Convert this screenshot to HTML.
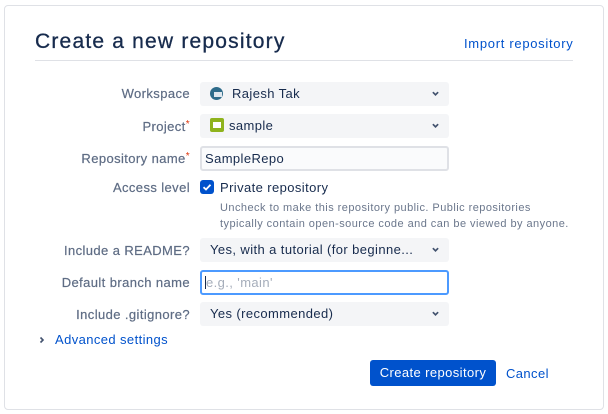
<!DOCTYPE html>
<html><head><style>
*{box-sizing:border-box;margin:0;padding:0}
body{width:608px;height:414px;background:#fff;font-family:"Liberation Sans",sans-serif;color:#172b4d;position:relative;overflow:hidden;letter-spacing:0.4px}
.card{position:absolute;left:4px;top:5px;width:600px;height:405px;border:1px solid #dfe1e6;border-radius:4px}
.abs{position:absolute}
h1{position:absolute;left:35px;top:30px;font-size:21px;font-weight:normal;color:#172b4d;letter-spacing:1.2px;-webkit-text-stroke:0.3px #172b4d}
.imp{left:464px;top:36px;font-size:13px;color:#0052cc;letter-spacing:0.7px}
.hr{left:35px;top:60px;width:538px;height:1px;background:#dfe1e6}
.lbl{right:418px;font-size:13px;color:#5e6c84;text-align:right;white-space:nowrap;-webkit-text-stroke:0.2px #5e6c84}
.req{color:#de350b;font-size:10px;vertical-align:top;-webkit-text-stroke:0}
.sel{left:200px;width:249px;height:24px;background:#f4f5f7;border-radius:3px;font-size:13px;color:#172b4d;line-height:24px;padding-left:10px}
.chev{position:absolute;right:10px;top:8px;width:7px;height:7px}
.inp{left:200px;width:249px;height:25px;border:2px solid #dfe1e6;border-radius:3px;background:#fafbfc;font-size:13px;line-height:21px;padding-left:3px}
</style></head><body>
<div class="card"></div>
<h1>Create a new repository</h1>
<div class="abs imp">Import repository</div>
<div class="abs hr"></div>

<div class="abs lbl" style="top:86px">Workspace</div>
<div class="abs sel" style="top:82px"><span style="display:inline-block;width:13px;height:13px;border-radius:50%;background:#2e6b8a;vertical-align:-2px;margin-right:9px;position:relative;overflow:hidden"><span style="position:absolute;left:4px;top:5px;width:8px;height:5px;background:#dfe7ee"></span></span>Rajesh Tak<svg class="chev" viewBox="0 0 8 8"><path d="M1 2.5L4 5.5L7 2.5" stroke="#42526e" stroke-width="2" fill="none"/></svg></div>

<div class="abs lbl" style="top:119px">Project<span class="req">*</span></div>
<div class="abs sel" style="top:114px"><span style="display:inline-block;width:14px;height:14px;border-radius:2px;background:#8fb31d;vertical-align:-2px;margin-right:5px;position:relative"><span style="position:absolute;left:3px;top:4px;width:8px;height:6px;background:#fff"></span></span>sample<svg class="chev" viewBox="0 0 8 8"><path d="M1 2.5L4 5.5L7 2.5" stroke="#42526e" stroke-width="2" fill="none"/></svg></div>

<div class="abs lbl" style="top:151px">Repository name<span class="req">*</span></div>
<div class="abs inp" style="top:146px">SampleRepo</div>

<div class="abs lbl" style="top:180px">Access level</div>
<div class="abs" style="left:200px;top:180px;width:14px;height:14px;background:#0052cc;border-radius:3px"><svg viewBox="0 0 14 14" width="14" height="14"><path d="M3.5 7.2L6 9.5L10.5 4.8" stroke="#fff" stroke-width="1.8" fill="none"/></svg></div>
<div class="abs" style="left:220px;top:180px;font-size:13px">Private repository</div>
<div class="abs" style="left:220px;top:200px;font-size:11px;color:#6b778c;line-height:16px;letter-spacing:0.45px">Uncheck to make this repository public. Public repositories<br>typically contain open-source code and can be viewed by anyone.</div>

<div class="abs lbl" style="top:243px">Include a README?</div>
<div class="abs sel" style="top:238px">Yes, with a tutorial (for beginne...<svg class="chev" viewBox="0 0 8 8"><path d="M1 2.5L4 5.5L7 2.5" stroke="#42526e" stroke-width="2" fill="none"/></svg></div>

<div class="abs lbl" style="top:275px">Default branch name</div>
<div class="abs inp" style="top:270px;border-color:#4c9aff;background:#fff;color:#a5adba"><span style="display:inline-block;width:1px;height:13px;background:#172b4d;vertical-align:-2px"></span>e.g., 'main'</div>

<div class="abs lbl" style="top:307px">Include .gitignore?</div>
<div class="abs sel" style="top:302px">Yes (recommended)<svg class="chev" viewBox="0 0 8 8"><path d="M1 2.5L4 5.5L7 2.5" stroke="#42526e" stroke-width="2" fill="none"/></svg></div>

<svg class="abs" style="left:39px;top:336px" width="6" height="8" viewBox="0 0 6 8"><path d="M1.5 1.5L4 4L1.5 6.5" stroke="#42526e" stroke-width="1.6" fill="none"/></svg>
<div class="abs" style="left:55px;top:332px;font-size:13px;color:#0052cc">Advanced settings</div>

<div class="abs" style="left:370px;top:360px;width:126px;height:26px;background:#0052cc;border-radius:3px;color:#fff;font-size:13px;line-height:26px;text-align:center">Create repository</div>
<div class="abs" style="left:506px;top:366px;font-size:13px;color:#0052cc">Cancel</div>
</body></html>
